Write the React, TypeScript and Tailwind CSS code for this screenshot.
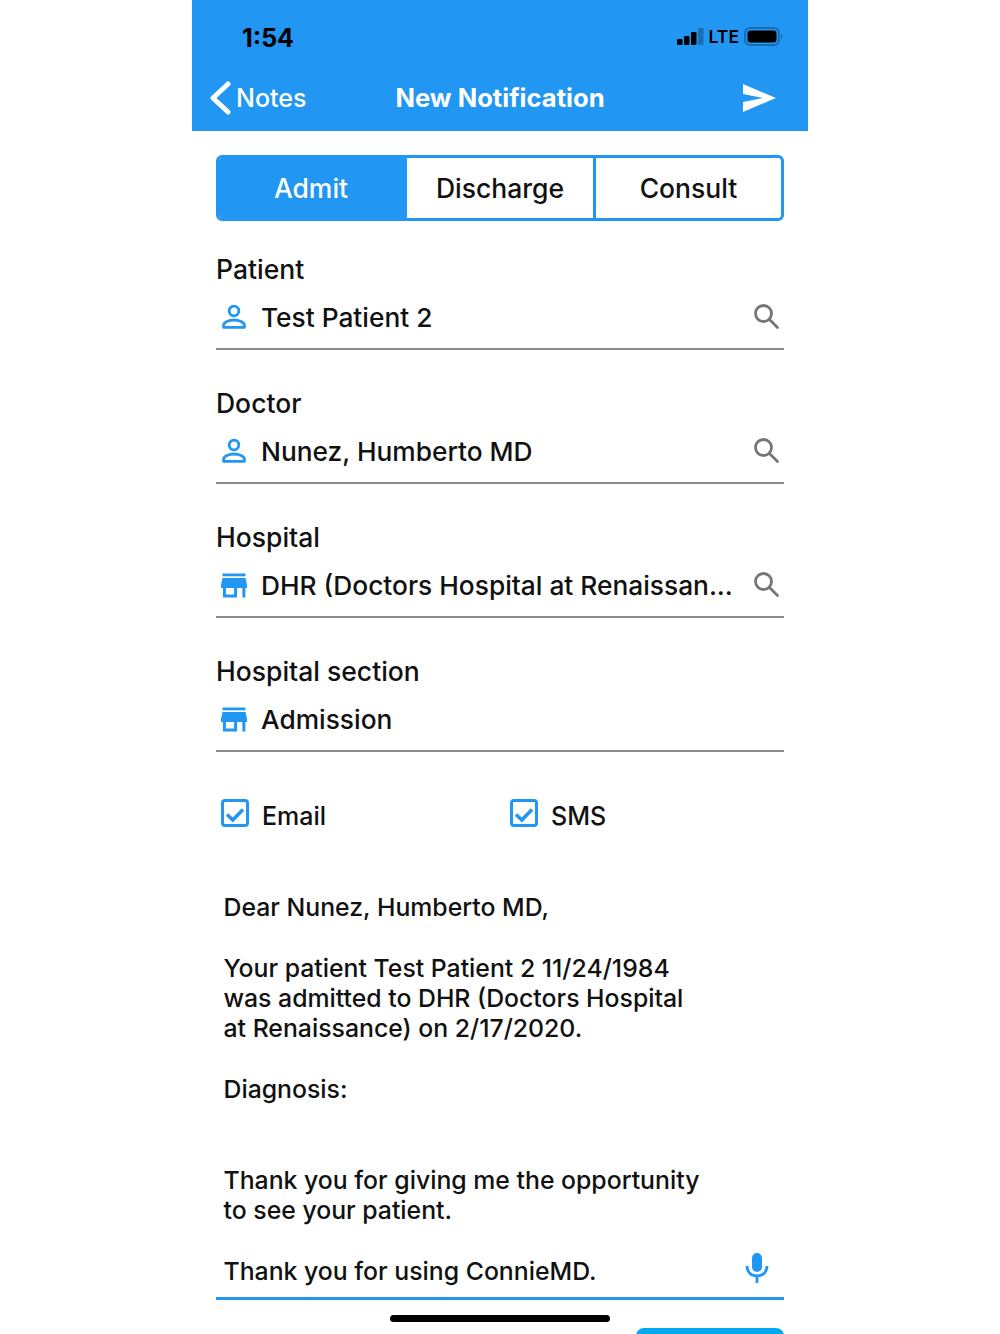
import React from "react";

const PersonIcon = () => (
  <svg width="28" height="28" viewBox="0 0 28 28" fill="none" stroke="#2196F3" strokeWidth="2.8">
    <circle cx="14" cy="8" r="4.800" />
    <path d="M3.600 24.400v-2.200c0-3.200 5.400-5.200 10.400-5.200s10.400 2 10.400 5.200v2.200z" strokeLinejoin="round" />
  </svg>
);

const StoreIcon = () => (
  <svg width="28" height="28" viewBox="0 0 28 28" fill="#2196F3">
    <path d="M2.500 2.500h23v2.800h-23z" />
    <path fillRule="evenodd" d="M2.500 7h23L27 14v3h-1.600v9.500h-3V17h-5.300v9.500H2.900V17H1v-3zM5.900 17v6.500h8.200V17z" />
  </svg>
);

const SearchIcon = () => (
  <svg width="28" height="28" viewBox="0 0 28 28" fill="none" stroke="#757575" strokeWidth="2.800">
    <circle cx="11.500" cy="11.500" r="8" />
    <path d="M17.500 17.500l8 8" strokeLinecap="round" />
  </svg>
);

const CheckIcon = () => (
  <svg width="28" height="28" viewBox="0 0 28 28" fill="none" stroke="#2196F3">
    <rect x="1.500" y="1.500" width="25" height="25" rx="2.500" strokeWidth="3" />
    <path d="M6 15.500l5.800 5.500L22 10.500" strokeWidth="3.400" />
  </svg>
);

function Field({ label, icon, value, search }: { label: string; icon: React.ReactNode; value: string; search?: boolean }) {
  return (
    <div className="h-[134px] pt-[31px]">
      <div className="h-[34px] text-[26.500px] font-medium leading-[34px] text-[#111]">{label}</div>
      <div className="mt-[12px] flex h-[40px] items-center">
        <div className="-mt-[2px] ml-[4px] flex w-[41px] shrink-0">{icon}</div>
        <div className="flex-1 whitespace-nowrap text-[26.300px] font-medium leading-[34px] text-[#111]">{value}</div>
        {search && <div className="-mt-[5px] mr-[4px]"><SearchIcon /></div>}
      </div>
      <div className="mt-[10px] h-[2px] bg-[#8a8a8a]" />
    </div>
  );
}

export default function App() {
  return (
    <div className="mx-auto h-[1334px] w-[616px] overflow-hidden bg-white font-['Inter','Liberation_Sans',sans-serif]">
      <header className="h-[131px] bg-[#2196F3]">
        <div className="flex h-[74px] items-center justify-between pl-[50px] pr-[25px]">
          <span className="pt-[4px] text-[25px] font-bold text-black">1:54</span>
          <div className="flex items-center gap-[5px]">
            <svg width="27" height="18" viewBox="0 0 27 18">
              <rect x="0" y="11" width="5.500" height="6" rx="1" fill="#000" />
              <rect x="7" y="8" width="5.500" height="9" rx="1" fill="#000" />
              <rect x="14" y="4" width="5.500" height="13" rx="1" fill="#000" />
              <rect x="21" y="0" width="5.500" height="17" rx="1" fill="#1a6fb5" />
            </svg>
            <span className="text-[17.500px] font-semibold leading-none text-black">LTE</span>
            <svg width="39" height="20" viewBox="0 0 39 20">
              <rect x="1" y="1" width="34" height="17" rx="5" fill="none" stroke="#1a5f96" strokeWidth="1.500" />
              <rect x="3.500" y="3.500" width="29" height="12" rx="3" fill="#000" />
              <path d="M37 7c1.500.5 1.500 4.500 0 5z" fill="#1a5f96" />
            </svg>
          </div>
        </div>
        <div className="flex h-[48px] items-center justify-between pl-[18px] pr-[32px]">
          <div className="flex w-[164px] items-center gap-[5px]">
            <svg width="21" height="34" viewBox="0 0 21 34" fill="none" stroke="#fff" strokeWidth="5" strokeLinecap="round" strokeLinejoin="round">
              <path d="M18 3L3 17l15 14" />
            </svg>
            <span className="pt-[2px] text-[25px] font-medium text-white">Notes</span>
          </div>
          <span className="text-[25.600px] font-bold text-white">New Notification</span>
          <div className="flex w-[150px] justify-end">
            <svg width="33" height="28" viewBox="0 0 33 28">
              <path d="M0 0l33 14L0 28V18l20-4-20-4z" fill="#fff" />
            </svg>
          </div>
        </div>
      </header>

      <main className="px-[24px]">
        <div className="mt-[24px] flex h-[66px] overflow-hidden rounded-[6px] border-[3px] border-[#2196F3] text-[26.500px] font-medium">
          <div className="flex w-[188px] items-center justify-center bg-[#2196F3] pr-[4px] pt-[2px] text-white">Admit</div>
          <div className="flex w-[186px] items-center justify-center pt-[2px] text-[#111]">Discharge</div>
          <div className="flex flex-1 items-center justify-center border-l-[3px] border-[#2196F3] pt-[2px] text-[#111]">Consult</div>
        </div>

        <Field label="Patient" icon={<PersonIcon />} value="Test Patient 2" search />
        <Field label="Doctor" icon={<PersonIcon />} value="Nunez, Humberto MD" search />
        <Field label="Hospital" icon={<StoreIcon />} value="DHR (Doctors Hospital at Renaissan..." search />
        <Field label="Hospital section" icon={<StoreIcon />} value="Admission" />

        <div className="mt-[33px] flex h-[46px] items-center">
          <div className="flex w-[289px] items-center pl-[5px]">
            <CheckIcon />
            <span className="ml-[13px] pt-[8px] text-[25px] font-medium text-[#111]">Email</span>
          </div>
          <div className="flex items-center pl-[5px]">
            <CheckIcon />
            <span className="ml-[13px] pt-[8px] text-[25px] font-medium text-[#111]">SMS</span>
          </div>
        </div>

        <div className="mt-[69px] h-[395px] border-b-[3px] border-[#2196F3] pl-[7.500px] text-[24.800px] font-medium leading-[30.300px] text-[#111]">
          <div className="flex h-[392px] items-end justify-between">
            <div className="pb-[11px]">
              <p>Dear Nunez, Humberto MD,</p>
              <p>&nbsp;</p>
              <p>Your patient Test Patient 2 11/24/1984</p>
              <p>was admitted to DHR (Doctors Hospital</p>
              <p>at Renaissance) on 2/17/2020.</p>
              <p>&nbsp;</p>
              <p>Diagnosis:</p>
              <p>&nbsp;</p>
              <p>&nbsp;</p>
              <p>Thank you for giving me the opportunity</p>
              <p>to see your patient.</p>
              <p>&nbsp;</p>
              <p>Thank you for using ConnieMD.</p>
            </div>
            <svg className="mb-[13px] mr-[15px]" width="24" height="32" viewBox="0 0 24 32" fill="none">
              <rect x="7" y="1" width="10" height="19" rx="5" fill="#2196F3" />
              <path d="M2 14c0 6 4 10 10 10s10-4 10-10M12 24v7" stroke="#2196F3" strokeWidth="2.800" />
            </svg>
          </div>
        </div>
      </main>

      <div className="relative">
        <div className="absolute left-[198px] top-[15px] h-[7px] w-[220px] rounded-full bg-black" />
        <div className="absolute left-[444px] top-[28px] h-[12px] w-[148px] rounded-t-[8px] bg-[#03A9F4]" />
      </div>
    </div>
  );
}
